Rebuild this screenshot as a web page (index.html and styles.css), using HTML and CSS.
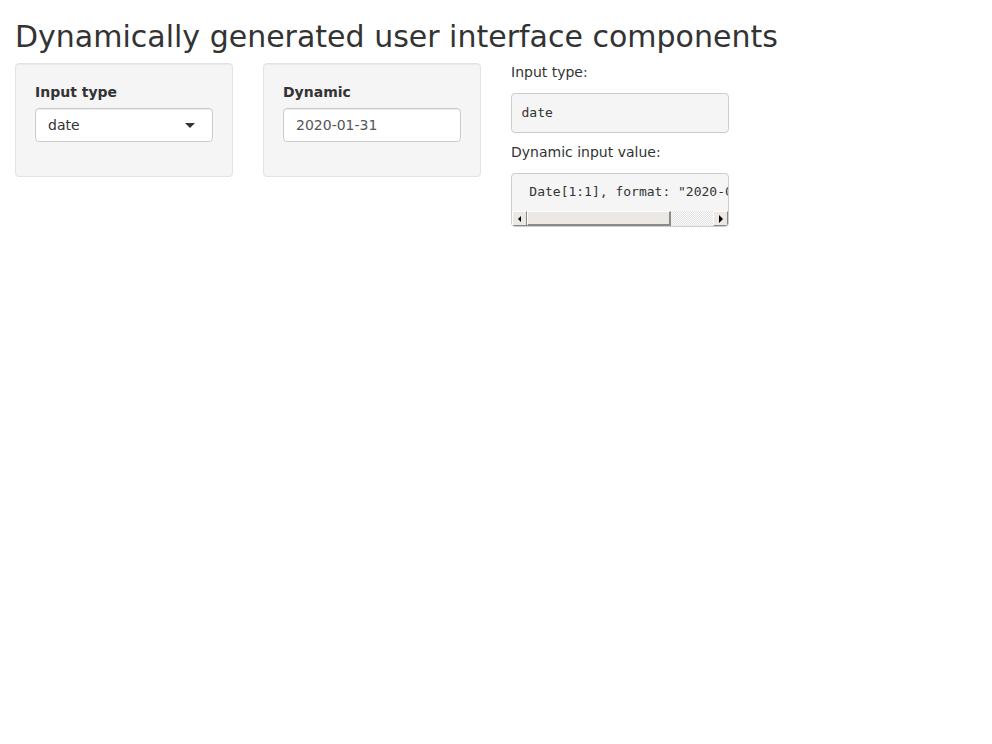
FILE: index.html
```html
<!DOCTYPE html>
<html>
<head>
<meta charset="utf-8">
<title>Dynamic UI</title>
<link rel="stylesheet" href="styles.css">
</head>
<body>
<div class="container">
  <h2 class="title">Dynamically generated user interface components</h2>
  <div class="row">
    <div class="col">
      <div class="well">
        <div class="form-group">
          <label class="label">Input type</label>
          <div class="select">
            <span>date</span>
            <span class="caret"></span>
          </div>
        </div>
      </div>
    </div>
    <div class="col">
      <div class="well">
        <div class="form-group">
          <label class="label">Dynamic</label>
          <div class="input">2020-01-31</div>
        </div>
      </div>
    </div>
    <div class="col">
      <p class="caption">Input type:</p>
      <div class="pre"><pre class="pre-text">date</pre></div>
      <p class="caption">Dynamic input value:</p>
      <div class="pre">
        <pre class="pre-text"> Date[1:1], format: "2020-01-31"</pre>
        <div class="hscroll">
          <span class="sb-btn"><span class="arrow-left"></span></span>
          <span class="sb-thumb"></span>
          <span class="sb-track"></span>
          <span class="sb-btn"><span class="arrow-right"></span></span>
        </div>
      </div>
    </div>
    <div class="col"></div>
  </div>
</div>
</body>
</html>
```

FILE: styles.css
```css
* { box-sizing: border-box; }
html, body {
  margin: 0;
  padding: 0;
  background: #fff;
}
body {
  font-family: "DejaVu Sans", "Helvetica Neue", Helvetica, Arial, sans-serif;
  font-size: 14px;
  line-height: 20px;
  color: #333;
}
.container {
  padding: 0 15px;
}
.title {
  font-size: 30px;
  font-weight: 500;
  line-height: 33px;
  margin: 20px 0 10px;
  color: #333;
}
.row {
  display: flex;
  margin: 0 -15px;
}
.col {
  width: 25%;
  padding: 0 15px;
}
.well {
  background: #f5f5f5;
  border: 1px solid #e3e3e3;
  border-radius: 4px;
  padding: 19px;
  box-shadow: inset 0 1px 1px rgba(0,0,0,0.05);
}
.form-group {
  margin-bottom: 15px;
}
.label {
  display: block;
  font-weight: 700;
  line-height: 18px;
  margin-bottom: 7px;
}
.select, .input {
  height: 34px;
  border: 1px solid #ccc;
  border-radius: 4px;
  background: #fff;
  padding: 6px 12px;
  line-height: 20px;
  display: flex;
  align-items: center;
  box-shadow: inset 0 1px 1px rgba(0,0,0,0.075);
}
.select {
  justify-content: space-between;
  color: #333;
  padding-right: 17px;
}
.input {
  color: #555;
}
.caret {
  width: 0;
  height: 0;
  border-style: solid;
  border-width: 5px 5px 0 5px;
  border-color: #333 transparent transparent transparent;
  margin-top: 1px;
}
.caption {
  margin: 0 0 12px;
  line-height: 18px;
}
.pre {
  margin: 0 0 10px;
  background: #f5f5f5;
  border: 1px solid #ccc;
  border-radius: 4px;
  overflow: hidden;
}
.pre-text {
  margin: 0;
  padding: 9.5px;
  font-family: "DejaVu Sans Mono", Menlo, Monaco, Consolas, monospace;
  font-size: 13px;
  line-height: 18.57px;
  color: #333;
  white-space: pre;
  overflow: hidden;
}
.hscroll {
  display: flex;
  height: 15px;
  background: #fff;
}
.sb-btn {
  width: 15px;
  height: 15px;
  background: #ece9e4;
  border-top: 1px solid #fff;
  border-left: 1px solid #fff;
  border-right: 1px solid #888;
  border-bottom: 1px solid #888;
  display: flex;
  align-items: center;
  justify-content: center;
}
.arrow-left {
  width: 0;
  height: 0;
  border-style: solid;
  border-width: 3px 3px 3px 0;
  border-color: transparent #000 transparent transparent;
}
.arrow-right {
  width: 0;
  height: 0;
  border-style: solid;
  border-width: 4px 0 4px 4px;
  border-color: transparent transparent transparent #000;
}
.sb-thumb {
  width: 144px;
  height: 15px;
  background: #ece9e4;
  border-top: 1px solid #fff;
  border-left: 1px solid #fff;
  border-right: 2px solid #8a8a8a;
  border-bottom: 2px solid #8a8a8a;
}
.sb-track {
  flex: 1;
  height: 15px;
  background: repeating-conic-gradient(#e4e4e4 0% 25%, #fafafa 0% 50%) 0 0 / 2px 2px;
}
```
